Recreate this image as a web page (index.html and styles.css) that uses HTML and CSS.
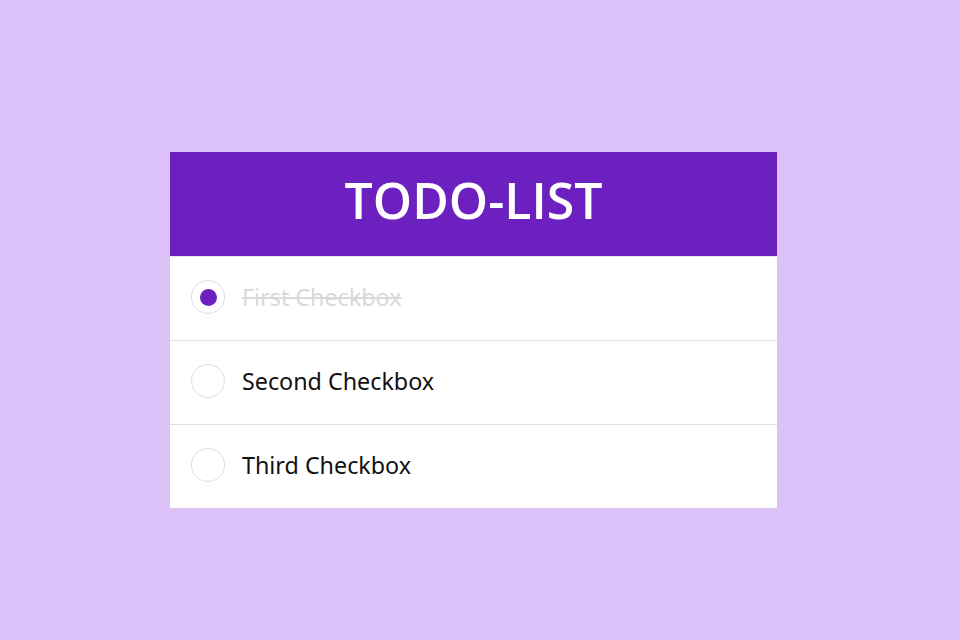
FILE: index.html
```html
<!DOCTYPE html>
<html>
<head>
<meta charset="utf-8">
<link rel="stylesheet" href="styles.css">
</head>
<body>
<div class="card">
  <div class="header"><h1 class="title">TODO-LIST</h1></div>
  <ul class="list">
    <li class="item done"><span class="radio"><span class="dot"></span></span><span class="label">First Checkbox</span></li>
    <li class="item"><span class="radio"></span><span class="label">Second Checkbox</span></li>
    <li class="item"><span class="radio"></span><span class="label">Third Checkbox</span></li>
  </ul>
</div>
</body>
</html>
```
FILE: styles.css
```css
html, body { margin: 0; padding: 0; }
body {
  width: 960px; height: 640px;
  background: #ddc2f9;
  font-family: "Noto Sans", "Open Sans", sans-serif;
  display: flex; justify-content: flex-start; align-items: flex-start;
  padding-left: 170px;
  box-sizing: border-box;
}
.card {
  margin-top: 152px;
  width: 607px;
  background: #fff;
}
.header {
  height: 105px;
  background: #6b20bf;
  display: flex; align-items: center; justify-content: center;
  border-bottom: 1px solid #e6e6e6;
  box-sizing: border-box;
  padding-bottom: 8px;
}
.title {
  margin: 0;
  color: #fff;
  font-family: "Open Sans", "Noto Sans", sans-serif;
  font-size: 50px;
  font-weight: 600;
  line-height: 1;
}
.list { list-style: none; margin: 0; padding: 0; }
.item {
  height: 84px;
  box-sizing: border-box;
  display: flex; align-items: center;
  padding-left: 21px;
  padding-bottom: 3px;
  border-bottom: 1px solid #e0e0e0;
}
.item:last-child { border-bottom: none; height: 83px; }
.radio {
  width: 34px; height: 34px;
  border: 1px solid #dedede;
  border-radius: 50%;
  box-sizing: border-box;
  display: flex; align-items: center; justify-content: center;
  flex: none;
}
.dot { width: 17px; height: 17px; border-radius: 50%; background: #6b20bf; }
.label {
  margin-left: 17px;
  font-size: 23.3px;
  color: #111;
}
.done .label { color: #d9d9d9; text-decoration: line-through; }
```
